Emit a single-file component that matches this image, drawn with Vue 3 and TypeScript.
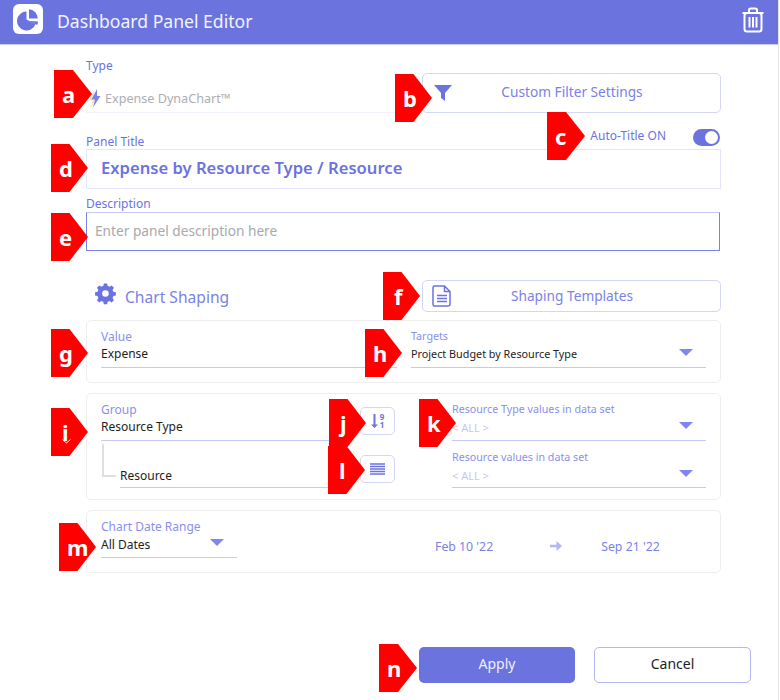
<script setup lang="ts">
// callout flags that sit on top of the form: x, y of the top-left corner
const flags = [
  { id: 'a', x: 54, y: 70, w: 38 },
  { id: 'b', x: 395, y: 74, w: 37 },
  { id: 'c', x: 547, y: 112, w: 38 },
  { id: 'd', x: 51, y: 144, w: 37 },
  { id: 'e', x: 51, y: 213, w: 37 },
  { id: 'f', x: 383, y: 272, w: 37 },
  { id: 'g', x: 51, y: 329, w: 37 },
  { id: 'h', x: 365, y: 329, w: 37 },
  { id: 'i', x: 51, y: 408, w: 37 },
  { id: 'j', x: 329, y: 399, w: 37 },
  { id: 'k', x: 419, y: 399, w: 37 },
  { id: 'l', x: 328, y: 446, w: 37 },
  { id: 'm', x: 59, y: 523, w: 37 },
  { id: 'n', x: 379, y: 644, w: 38 }
]
const narrowLetters = ['f', 'i', 'j', 'l']
</script>

<template>
  <div class="dialog">
    <header class="bar">
      <div class="logo">
        <svg width="26" height="26" viewBox="0 0 26 26">
          <path d="M11.500 5.500a9.500 9.500 0 1 0 9 12.500l-9-4.500z" fill="#6b73df" />
          <path d="M14 3.200a9.500 9.500 0 0 1 8.800 9.300l-8.800 0z" fill="#6b73df" />
          <path d="M14.200 15l8 4a9 9 0 0 0 .8-3.600z" fill="#6b73df" />
        </svg>
      </div>
      <span class="bar-title">Dashboard Panel Editor</span>
      <svg class="trash" width="24" height="26" viewBox="0 0 24 26" fill="none" stroke="#fff" stroke-width="2">
        <path d="M1.500 6h21" />
        <path d="M8 5.500V3.200C8 2 8.800 1.500 9.800 1.500h4.400c1 0 1.800.5 1.800 1.700v2.300" />
        <rect x="3.500" y="6" width="17" height="18.500" rx="2.500" />
        <path d="M8.500 10v10.500M12 10v10.500M15.500 10v10.500" />
      </svg>
    </header>

    <main class="form">
      <div class="top-row">
        <div class="type-field">
          <label class="lbl">Type</label>
          <div class="type-value">
            <svg width="14" height="20" viewBox="0 0 14 20">
              <path d="M6.500 1 1 11.500h3.500L2.500 19l6.500-11H5.800z" fill="#fbe3c4" />
              <path d="M9 0 3.500 10.500H7L5 18.500l7.500-11.500H9z" fill="#7b83e8" />
            </svg>
            <span>Expense DynaChart™</span>
          </div>
        </div>
        <button class="outline filter-btn" type="button">
          <svg width="18" height="18" viewBox="0 0 18 18">
            <path d="M0 1h18l-7 8v8l-4-3V9z" fill="#6b73df" />
          </svg>
          <span>Custom Filter Settings</span>
        </button>
      </div>

      <div class="title-head">
        <label class="lbl">Panel Title</label>
        <div class="auto">
          <span>Auto-Title ON</span>
          <span class="toggle"><i></i></span>
        </div>
      </div>
      <div class="title-box">Expense by Resource Type / Resource</div>

      <label class="lbl desc-lbl">Description</label>
      <input class="desc" type="text" placeholder="Enter panel description here" />

      <div class="shape-row">
        <div class="shape-title">
          <svg width="22" height="22" viewBox="0 0 24 24">
            <path fill="#6b73df" fill-rule="evenodd" d="M10 1h4l.6 3a8.300 8.300 0 0 1 2.300 1l2.600-1.700 2.800 2.800-1.700 2.600c.4.700.8 1.500 1 2.300l3 .6v4l-3 .6c-.2.800-.6 1.600-1 2.300l1.700 2.600-2.800 2.800-2.600-1.700c-.7.400-1.500.8-2.300 1l-.6 3h-4l-.6-3a8.300 8.300 0 0 1-2.300-1l-2.600 1.700-2.800-2.800 1.700-2.600a8.300 8.300 0 0 1-1-2.300l-3-.6v-4l3-.6c.2-.8.600-1.600 1-2.300L1.700 6.100l2.800-2.800L7.100 5c.7-.4 1.500-.8 2.300-1zM12 9a4 4 0 1 0 0 8 4 4 0 0 0 0-8z" transform="translate(.6 .6) scale(.9) translate(0 -1)" />
          </svg>
          <span>Chart Shaping</span>
        </div>
        <button class="outline tmpl-btn" type="button">
          <svg width="20" height="22" viewBox="0 0 20 22" fill="none" stroke="#6b73df" stroke-width="1.500">
            <path d="M2.500 1h10l5.500 5.500V19a2 2 0 0 1-2 2H2.500a1.500 1.500 0 0 1-1.500-1.500v-17A1.500 1.500 0 0 1 2.500 1z" />
            <path d="M12.500 1v5.500H18M5 10.500h10M5 13.500h10M5 16.500h10" />
          </svg>
          <span>Shaping Templates</span>
        </button>
      </div>

      <section class="card value-card">
        <div class="field">
          <label class="mini">Value</label>
          <div class="val">Expense</div>
        </div>
        <div class="field">
          <label class="mini narrow">Targets</label>
          <div class="val small">Project Budget by Resource Type</div>
          <i class="caret"></i>
        </div>
      </section>

      <section class="card group-card">
        <div class="group-left">
          <div class="group-line">
            <div class="field grow">
              <label class="mini">Group</label>
              <div class="val">Resource Type</div>
            </div>
            <button class="square" type="button">
              <svg width="7" height="16" viewBox="0 0 7 16" fill="#6b73df">
                <path d="M2.500 1h2v10.500H7L3.500 15 0 11.500h2.500z" />
              </svg>
              <span class="digits"><b>9</b><b>1</b></span>
            </button>
          </div>
          <div class="group-line sub">
            <span class="tree"></span>
            <div class="field grow">
              <div class="val">Resource</div>
            </div>
            <button class="square" type="button">
              <svg width="15" height="12" viewBox="0 0 15 12" stroke="#6b73df" stroke-width="1.400">
                <path d="M0 1h15M0 3.500h15M0 6h15M0 8.500h15M0 11h15" />
              </svg>
            </button>
          </div>
        </div>
        <div class="group-right">
          <div class="field">
            <label class="mini narrow">Resource Type values in data set</label>
            <div class="val all">&lt; ALL &gt;</div>
            <i class="caret"></i>
          </div>
          <div class="field">
            <label class="mini narrow">Resource values in data set</label>
            <div class="val all">&lt; ALL &gt;</div>
            <i class="caret"></i>
          </div>
        </div>
      </section>

      <section class="card date-card">
        <div class="field date-field">
          <label class="mini">Chart Date Range</label>
          <div class="val">All Dates</div>
          <i class="caret near"></i>
        </div>
        <div class="dates">
          <span>Feb 10 '22</span>
          <svg width="12" height="10" viewBox="0 0 12 10" fill="#b3b8f4">
            <path d="M0 3.800h6.500V0L12 5l-5.500 5V6.200H0z" />
          </svg>
          <span class="date-end">Sep 21 '22</span>
        </div>
      </section>

      <footer class="actions">
        <button class="apply" type="button">Apply</button>
        <button class="cancel" type="button">Cancel</button>
      </footer>
    </main>

    <div
      v-for="f in flags"
      :key="f.id"
      class="flag"
      :class="{ thin: narrowLetters.includes(f.id) }"
      :style="{ left: f.x + 'px', top: f.y + 'px', width: f.w + 'px' }"
    >
      <span>{{ f.id }}</span>
      <svg v-if="f.id === 'i'" class="chev" width="9" height="5" viewBox="0 0 9 5" fill="none" stroke="#fff">
        <path d="M.5.500 4.500 4l4-3.500" />
      </svg>
    </div>
  </div>
</template>

<style>
html, body { background: #fff; }
</style>

<style scoped>
.dialog { position: relative; width: 778px; height: 700px; background: #fff; border-right: 1px solid #e6e6e6; font-family: "Noto Sans", sans-serif; overflow: hidden; }
.bar { display: flex; align-items: center; height: 44px; background: #6b73df; border-bottom: 1px solid #c9ccf3; padding: 0 13px; box-sizing: content-box; margin-bottom: -1px; }
.logo { width: 30px; height: 30px; margin-top: -6px; background: #fff; border-radius: 6px; display: flex; align-items: center; justify-content: center; }
.bar-title { margin-left: 14px; margin-top: -2px; color: #f2f3fe; font-size: 17.600px; }
.trash { margin-left: auto; margin-top: -4px; }

.form { display: flex; flex-direction: column; padding: 0 57px 0 86px; }
.lbl { display: block; color: #6b73df; font-size: 12px; line-height: 14px; }
button { font-family: inherit; cursor: pointer; }

.top-row { display: flex; justify-content: space-between; height: 68px; }
.type-field { width: 314px; margin-top: 15px; }
.type-value { display: flex; align-items: center; gap: 3px; height: 21px; margin-top: 3px; padding: 12px 0 3px 2px; border-bottom: 1px solid #f1f2fb; color: #adadb3; font-size: 12.600px; }
.outline { display: flex; align-items: center; background: #fff; border: 1.500px solid #d4d6f8; border-radius: 5px; color: #7a82e6; font-size: 13.700px; padding: 0; }
.outline span { flex: 1; text-align: center; }
.filter-btn { width: 299px; height: 40px; margin-top: 29px; padding: 0 28px 3px 11px; }
.filter-btn svg { margin-top: 3px; }

.title-head { display: flex; justify-content: space-between; align-items: flex-end; height: 37px; }
.auto { display: flex; align-items: flex-start; align-self: flex-start; gap: 27px; margin: 16px 1px 0 0; color: #6b73df; font-size: 12px; line-height: 16px; }
.toggle { display: flex; justify-content: flex-end; align-items: center; width: 27px; height: 17px; margin-top: 1px; padding: 0 2px; box-sizing: border-box; border-radius: 9px; background: #6b73df; }
.toggle i { width: 13px; height: 13px; border-radius: 50%; background: #fff; }
.title-box { height: 40px; box-sizing: border-box; border: 1px solid #e4e5fa; padding-left: 14px; color: #6b73df; font-size: 16.600px; font-weight: 600; line-height: 36px; }

.desc-lbl { margin-top: 8px; }
.desc { height: 39px; margin-top: 1px; box-sizing: border-box; width: 634px; padding: 0 8px 2px; border: 1px solid #7a82e6; border-top-color: #c5c8f4; outline: none; font-family: inherit; font-size: 13.700px; background: #fff; }
.desc::placeholder { color: #a9a9ae; opacity: 1; }

.shape-row { display: flex; justify-content: space-between; margin-top: 29px; height: 32px; }
.shape-title { display: flex; align-items: center; gap: 8px; margin-left: 9px; color: #7a82e6; font-size: 15.600px; }
.shape-title svg { margin-top: -4px; }
.shape-title span { margin-top: 2px; }
.tmpl-btn { width: 299px; height: 32px; padding: 0 28px 1px 9px; }

.card { box-sizing: border-box; border: 1.500px solid #eeeef0; border-radius: 5px; margin-top: 10px; padding-left: 14px; }
.value-card { display: grid; grid-template-columns: 296px 295px; column-gap: 14px; height: 63px; margin-top: 8px; padding-top: 9px; }
.field { position: relative; display: flow-root; border-bottom: 1.500px solid #c6c9f6; height: 37px; box-sizing: content-box; }
.mini { display: block; color: #8a90ee; font-size: 12px; line-height: 14px; }
.mini.narrow { font-size: 10.700px; margin: -1px 0 1px; }
.val { color: #1d1d22; font-size: 12px; line-height: 16px; margin-top: 2px; }
.val.small { font-size: 10.800px; margin-top: 3px; }
.val.all { color: #c4c7f6; font-size: 11px; margin-top: 4px; }
.caret { position: absolute; right: 13px; top: 19px; width: 0; height: 0; border-left: 7.500px solid transparent; border-right: 7.500px solid transparent; border-top: 7.500px solid #7f86ee; }
.caret.near { right: 13px; top: 19px; border-left-width: 7px; border-right-width: 7px; }

.group-card { display: flex; height: 107px; padding-top: 9px; }
.group-left { width: 294px; }
.group-line { display: flex; align-items: flex-start; }
.grow { flex: 1; }
.square { flex: none; width: 35px; height: 28px; margin: 4px 0 0 8px; background: #fff; border: 1.500px solid #d4d6f8; border-radius: 5px; display: flex; align-items: center; justify-content: center; gap: 2px; padding: 0; }
.digits { display: flex; flex-direction: column; color: #6b73df; font-size: 8px; line-height: 8px; }
.digits b { font-weight: 700; }
.group-line.sub { height: 47px; }
.group-line.sub .field { height: 46px; }
.group-line.sub .val { margin-top: 27px; }
.group-line.sub .square { margin-top: 14px; }
.tree { flex: none; width: 14px; height: 33px; margin: 3px 4px 0 1px; border-left: 2px solid #dedfe3; border-bottom: 2px solid #dedfe3; box-sizing: border-box; }
.group-right { width: 254px; margin-left: 57px; }
.group-right .field + .field { height: 36px; margin-top: 10px; }

.date-card { display: flex; height: 63px; padding-top: 9px; }
.date-field { width: 136px; }
.date-field .val { margin-top: 3px; }
.dates { display: flex; align-items: center; height: 36px; margin: 8px 0 0 198px; gap: 57px; color: #7a82e6; font-size: 12.300px; }
.date-end { margin-left: -18px; }

.actions { display: flex; justify-content: flex-end; gap: 19px; margin: 74px -30px 0 0; }
.apply, .cancel { height: 36px; box-sizing: border-box; border-radius: 5px; font-size: 14px; padding: 0 0 3px; }
.apply { width: 156px; background: #6b73df; border: none; color: #eef0fe; }
.cancel { width: 157px; background: #fff; border: 1.500px solid #b2b6f2; color: #1d1d22; }

.flag { position: absolute; height: 48px; background: #ff0000; clip-path: polygon(0 0, 50% 0, 100% 50%, 50% 100%, 0 100%); display: flex; align-items: center; padding-left: 8px; box-sizing: border-box; color: #fff; font-size: 22px; font-weight: 700; line-height: 1; }
.flag.thin { padding-left: 11px; }
.flag span { display: block; margin-top: -1px; }
.chev { position: absolute; left: 11px; top: 31px; }
</style>
